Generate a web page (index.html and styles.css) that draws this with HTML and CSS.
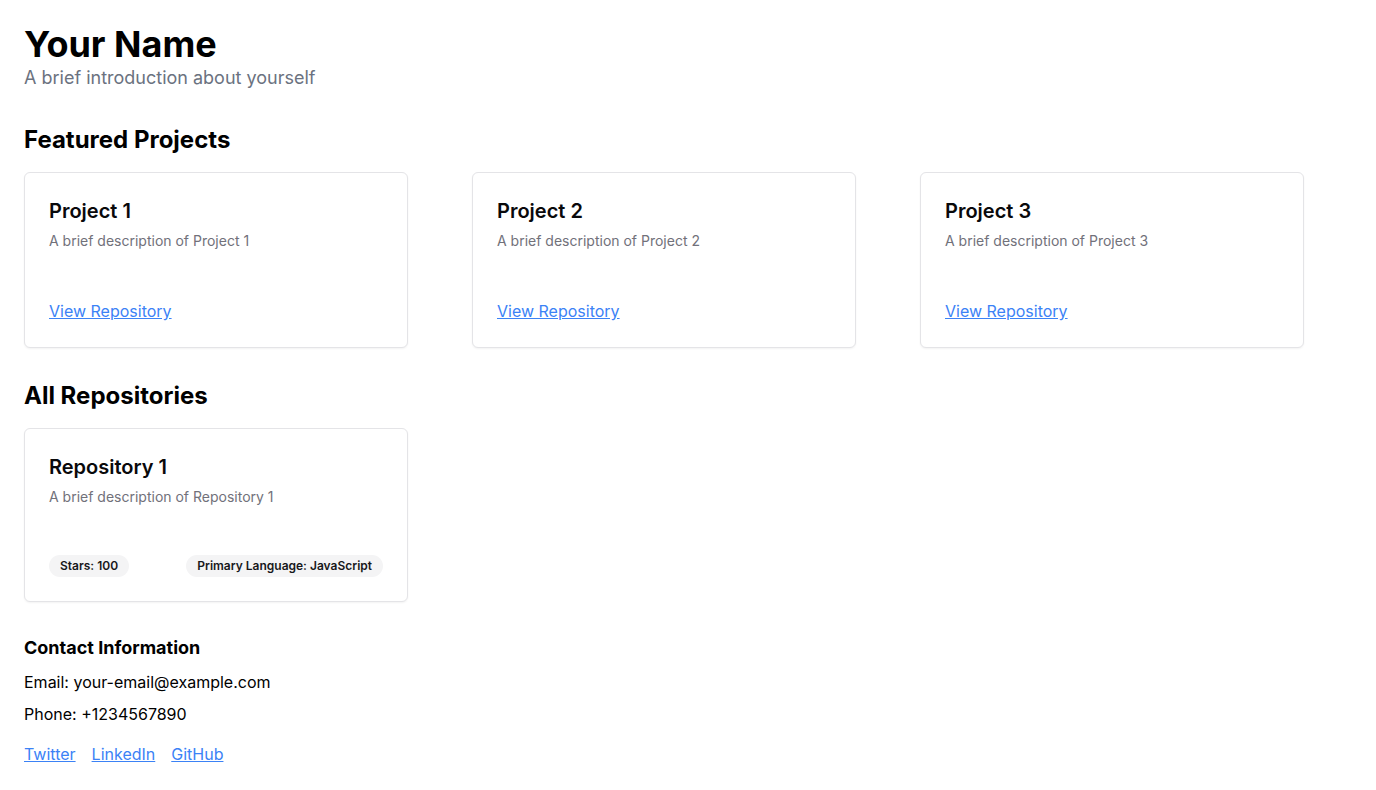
FILE: index.html
```html
<!DOCTYPE html>
<html lang="en">
<head>
<meta charset="utf-8">
<meta name="viewport" content="width=device-width, initial-scale=1">
<title>Your Name</title>
<link rel="stylesheet" href="styles.css">
</head>
<body>
<main class="page">
  <header class="intro">
    <h1 class="intro-name">Your Name</h1>
    <p class="intro-text">A brief introduction about yourself</p>
  </header>
  <section class="section">
    <h2 class="section-title">Featured Projects</h2>
    <div class="grid">
      <article class="card">
        <div class="card-header">
          <h3 class="card-title">Project 1</h3>
          <p class="card-description">A brief description of Project 1</p>
        </div>
        <div class="card-content"><a class="link" href="#">View Repository</a></div>
      </article>
      <article class="card">
        <div class="card-header">
          <h3 class="card-title">Project 2</h3>
          <p class="card-description">A brief description of Project 2</p>
        </div>
        <div class="card-content"><a class="link" href="#">View Repository</a></div>
      </article>
      <article class="card">
        <div class="card-header">
          <h3 class="card-title">Project 3</h3>
          <p class="card-description">A brief description of Project 3</p>
        </div>
        <div class="card-content"><a class="link" href="#">View Repository</a></div>
      </article>
    </div>
  </section>
  <section class="section">
    <h2 class="section-title">All Repositories</h2>
    <div class="grid">
      <article class="card">
        <div class="card-header">
          <h3 class="card-title">Repository 1</h3>
          <p class="card-description">A brief description of Repository 1</p>
        </div>
        <div class="card-content card-badges">
          <span class="badge">Stars: 100</span>
          <span class="badge">Primary Language: JavaScript</span>
        </div>
      </article>
    </div>
  </section>
  <footer class="contact">
    <h2 class="contact-title">Contact Information</h2>
    <p class="contact-line">Email: your-email@example.com</p>
    <p class="contact-line">Phone: +1234567890</p>
    <nav class="social" aria-label="Social links">
      <a class="link" href="#">Twitter</a>
      <a class="link" href="#">LinkedIn</a>
      <a class="link" href="#">GitHub</a>
    </nav>
  </footer>
</main>
</body>
</html>
```
FILE: styles.css
```css
* {
  box-sizing: border-box;
  margin: 0;
}

body {
  background: #fff;
  color: #000;
  font-family: Inter, "Liberation Sans", sans-serif;
  font-size: 16px;
  line-height: 24px;
}

.page {
  padding: 24px;
}

.intro {
  margin-bottom: 32px;
}

.intro-name {
  font-size: 36px;
  line-height: 40px;
  font-weight: 700;
}

.intro-text {
  color: #6b7280;
  font-size: 18px;
  line-height: 28px;
}

.section {
  margin-bottom: 32px;
}

.section-title {
  margin-bottom: 16px;
  font-size: 24px;
  line-height: 32px;
  font-weight: 700;
}

.grid {
  display: grid;
  grid-template-columns: repeat(auto-fill, 384px);
  gap: 64px;
}

.card {
  border: 1px solid #e4e4e7;
  border-radius: 6px;
  background: #fff;
  box-shadow: 0 1px 2px rgba(0, 0, 0, 0.05);
  color: #09090b;
}

.card-header {
  display: flex;
  flex-direction: column;
  gap: 6px;
  padding: 24px;
}

.card-title {
  font-size: 20px;
  line-height: 28px;
  font-weight: 600;
}

.card-description {
  color: #71717a;
  font-size: 14px;
  line-height: 20px;
}

.card-content {
  padding: 24px;
}

.card-badges {
  display: flex;
  justify-content: space-between;
}

.badge {
  padding: 3px 11px;
  border-radius: 12px;
  background: #f4f4f5;
  color: #18181b;
  font-size: 12px;
  line-height: 16px;
  font-weight: 600;
}

.link {
  color: #3b82f6;
  text-decoration: underline;
}

.contact-title {
  margin-bottom: 8px;
  font-size: 18px;
  line-height: 28px;
  font-weight: 700;
}

.contact-line {
  margin-bottom: 8px;
}

.social {
  display: flex;
  gap: 16px;
  margin-top: 16px;
}
```
